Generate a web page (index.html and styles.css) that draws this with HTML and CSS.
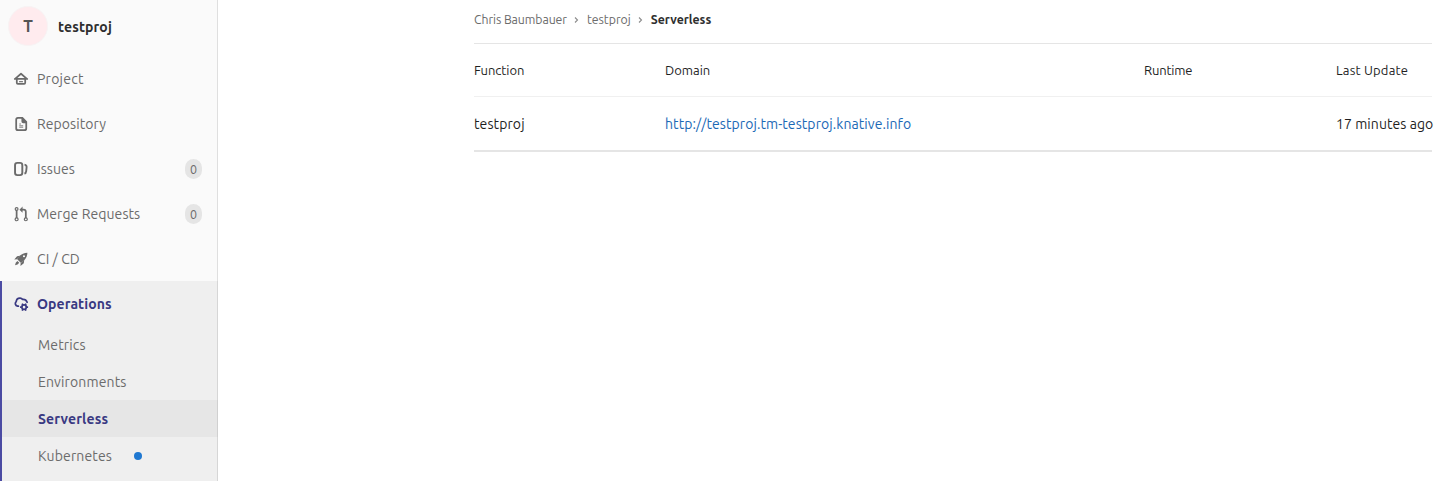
FILE: index.html
```html
<!DOCTYPE html>
<html lang="en">
<head>
<meta charset="utf-8">
<title>Serverless · testproj</title>
<link rel="stylesheet" href="styles.css">
</head>
<body>
<div class="layout">
  <nav class="sidebar">
    <a class="context"><span class="avatar">T</span><span class="context-title">testproj</span></a>
    <ul class="menu">
      <li class="item"><svg class="icon" viewBox="0 0 16 16"><path d="M1.200 7.800 8 2l6.800 5.800M0.900 7.900h14.200M3.200 8v4.300q0 1.200 1.200 1.200h7.200q1.200 0 1.200-1.200V8" fill="none" stroke="currentColor" stroke-width="2" stroke-linecap="round" stroke-linejoin="round"/><path d="M5.800 10.400h4.400v1.300H5.800z"/></svg><span class="label label-wide">Project</span></li>
      <li class="item"><svg class="icon" viewBox="0 0 16 16"><path d="M4.500 0H10l5 5v8a3 3 0 0 1-3 3H4.500a3 3 0 0 1-3-3V3a3 3 0 0 1 3-3zM4.700 2a1.200 1.200 0 0 0-1.200 1.200v9.600A1.200 1.200 0 0 0 4.700 14h7.100a1.200 1.200 0 0 0 1.200-1.200V7h-2.500a2 2 0 0 1-2-2V2z" fill-rule="evenodd"/><path d="M6 7.500h2v1.200H6zM6 9.300h4.500v1.200H6zM6 11.100h4.500v1.200H6z" opacity=".8"/></svg><span class="label">Repository</span></li>
      <li class="item"><svg class="icon" viewBox="0 0 16 16"><rect x="1.200" y="1" width="8.300" height="14" rx="2.600" fill="none" stroke="currentColor" stroke-width="2.200"/><path d="M12 2.900q2.700.4 2.400 3.200l-.5 4.500q-.3 2.300-2 2.800" fill="none" stroke="currentColor" stroke-width="2.100"/></svg><span class="label">Issues</span><span class="badge">0</span></li>
      <li class="item"><svg class="icon" viewBox="0 0 16 16"><g fill="none" stroke="currentColor"><circle cx="3" cy="2.300" r="1.600" stroke-width="1.300"/><circle cx="3" cy="14" r="1.700" stroke-width="1.400"/><circle cx="13.500" cy="14" r="1.700" stroke-width="1.400"/><path d="M3 4V12.500M13.500 12.500V5.500q0-2.500-2.500-2.500H8.500" stroke-width="2"/></g><path d="M9.800-.5v7L6.200 3z"/></svg><span class="label">Merge Requests</span><span class="badge">0</span></li>
      <li class="item"><svg class="icon" viewBox="0 0 16 16"><path fill-rule="evenodd" d="M3.700 8.400C6 3.500 10 1 15.300.8c-.1 5.200-2.700 9-7.600 11.600zM11.400 3.700a1.200 1.200 0 1 0 .01 2.400 1.200 1.200 0 0 0 0-2.400z"/><path d="M6.800 4.300 3.500 4.800.3 8.600l3.200-.2zM11.700 9.400l-.5 3.400-3.800 3.100.2-3.400zM3.800 10.200 6 12.400q-1.500 2.400-4.800 2.700.3-3.300 2.600-4.900z"/></svg><span class="label">CI / CD</span></li>
    </ul>
    <div class="active-group">
      <div class="item item-active"><svg class="icon" viewBox="0 0 16 16"><path d="M5 10.500H4a3 3 0 0 1-1.500-5.200Q3 1 7 1.200q1.700.1 2.800 1.500 3.800-.4 5.200 3.300" fill="none" stroke="currentColor" stroke-width="2" stroke-linecap="round"/><circle cx="11.500" cy="11.600" r="2.500" fill="none" stroke="currentColor" stroke-width="2"/><path d="M9.300 7.600l1 1.800M13.700 7.600l-1 1.800M9.300 15.600l1-1.800M13.700 15.600l-1-1.800M6.900 11.600h1.600M14.500 11.600h1.600" stroke="currentColor" stroke-width="2"/></svg><span class="label">Operations</span></div>
      <ul class="submenu">
        <li class="subitem"><span class="sublabel">Metrics</span></li>
        <li class="subitem"><span class="sublabel">Environments</span></li>
        <li class="subitem subitem-active"><span class="sublabel">Serverless</span></li>
        <li class="subitem"><span class="sublabel">Kubernetes</span><span class="dot"></span></li>
      </ul>
    </div>
  </nav>
  <main class="content">
    <div class="breadcrumbs">
      <span class="crumb crumb-owner">Chris Baumbauer</span>
      <svg class="angle" viewBox="0 0 5 8"><path d="M1 1.500 3.500 4 1 6.500"/></svg>
      <span class="crumb">testproj</span>
      <svg class="angle" viewBox="0 0 5 8"><path d="M1 1.500 3.500 4 1 6.500"/></svg>
      <span class="crumb-current">Serverless</span>
    </div>
    <div class="row row-head">
      <span class="head-function">Function</span><span>Domain</span><span class="head-runtime">Runtime</span><span class="head-update">Last Update</span>
    </div>
    <div class="row row-body">
      <span class="name">testproj</span><a class="link">http://testproj.tm-testproj.knative.info</a><span></span><span class="time">17 minutes ago</span>
    </div>
  </main>
</div>
</body>
</html>
```

FILE: styles.css
```css
* { box-sizing: border-box; }
body { margin: 0; background: #fff; color: #1f1f1f; font-family: Ubuntu, "Noto Sans", sans-serif; font-size: 14px; line-height: 20px; }
ul { margin: 0; padding: 0; list-style: none; }
.layout { display: flex; height: 481px; overflow: hidden; }
.sidebar { width: 218px; flex: none; background: #fafafa; box-shadow: inset -1px 0 0 #dfdfdf; white-space: nowrap; color: #6b6b6b; }
.context { display: flex; align-items: center; height: 56px; padding: 0 0 4px 8px; color: #2e2e2e; font-weight: 700; }
.context-title { padding-top: 2px; letter-spacing: .13px; }
.avatar { width: 40px; height: 40px; margin-right: 10px; border-radius: 50%; border: 1px solid #f8f3f4; background: #ffebee; color: #555; font-size: 16px; line-height: 38px; text-align: center; font-weight: 700; }
.item { display: flex; align-items: center; height: 45px; padding: 0 15px 0 14px; }
.label { letter-spacing: .08px; }
.label-wide { letter-spacing: .25px; }
.icon { width: 14px; height: 14px; margin-right: 9px; fill: currentColor; flex: none; overflow: visible; }
.badge { margin-left: auto; margin-right: 1px; width: 17px; height: 20px; border-radius: 9px; background: #e5e5e5; font-size: 12.5px; line-height: 20px; text-align: center; }
.active-group { height: 200px; background: #efefef; border-left: 2px solid #4b4ba3; box-shadow: inset -1px 0 0 #d6d6d6; }
.item-active { padding-left: 12px; color: #393982; font-weight: 700; }
.subitem { display: flex; align-items: center; height: 37px; padding-left: 36px; }
.sublabel { letter-spacing: .13px; }
.subitem-active { background: #e6e6e6; box-shadow: inset -1px 0 0 #d0d0d0; color: #393982; font-weight: 700; }
.dot { width: 8px; height: 8px; margin-left: 22px; border-radius: 50%; background: #1f78d1; }
.content { width: 958px; margin-left: 256px; white-space: nowrap; flex: none; }
.breadcrumbs { display: flex; align-items: center; height: 44px; padding-bottom: 4px; border-bottom: 1px solid #e5e5e5; font-size: 12.3px; color: #6b6b6b; }
.crumb-owner { letter-spacing: -.08px; }
.angle { width: 5px; height: 8px; margin: 0 8px 0 7px; fill: none; stroke: #8c8c8c; stroke-width: 1.1; }
.crumb-current { color: #2e2e2e; font-weight: 700; }
.row { display: grid; grid-template-columns: 191px 479px 192px 96px; align-items: center; }
.row-head { height: 53px; border-bottom: 1px solid #f0f0f0; font-size: 13px; }
.head-function { letter-spacing: -.06px; }
.head-runtime { letter-spacing: -.18px; }
.head-update { letter-spacing: .19px; }
.row-body { height: 55px; border-bottom: 2px solid #e5e5e5; }
.name { letter-spacing: .1px; }
.link { color: #1b69b6; letter-spacing: .075px; }
.time { letter-spacing: .07px; }
```
